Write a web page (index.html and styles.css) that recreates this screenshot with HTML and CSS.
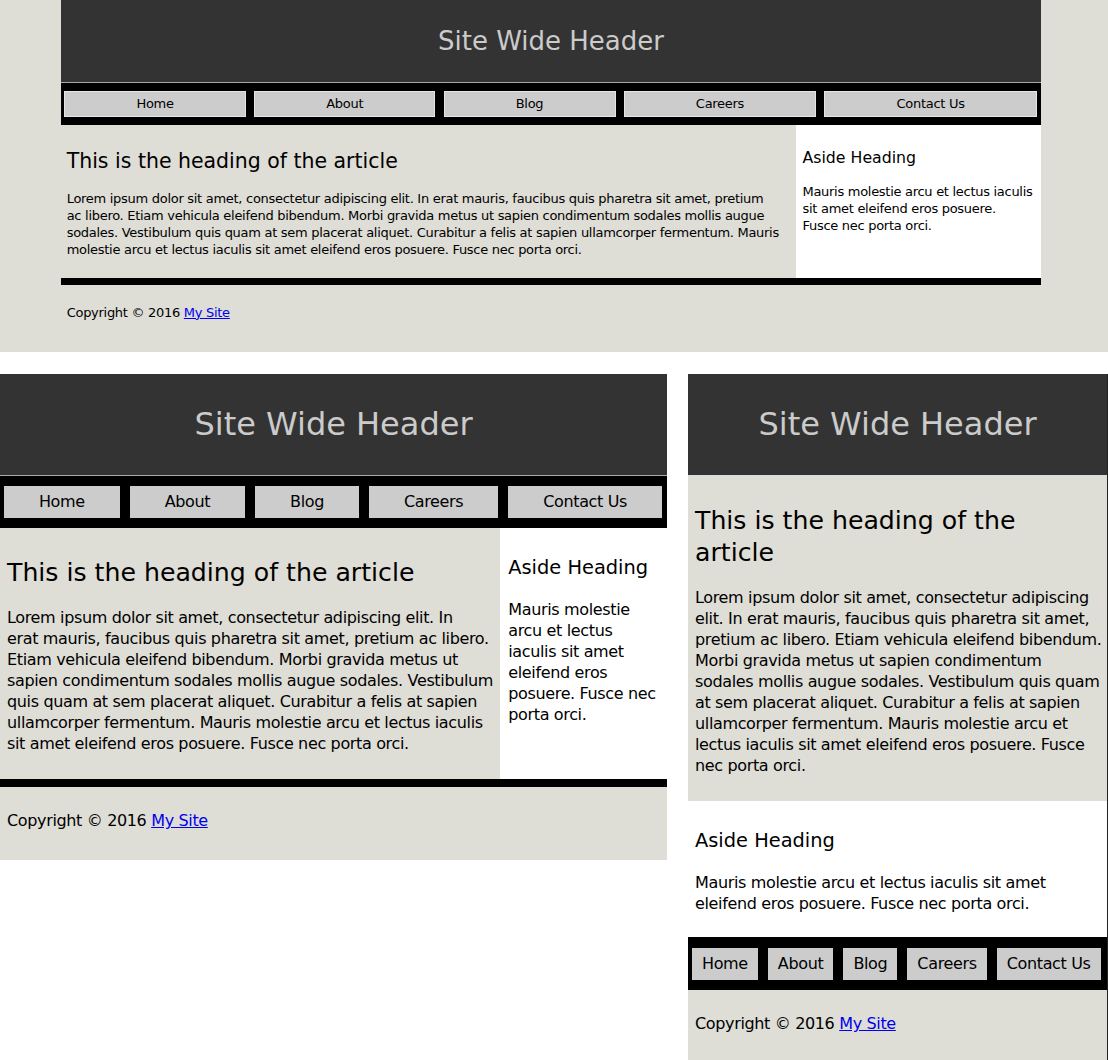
FILE: index.html
```html
<!DOCTYPE html>
<html lang="en">
<head>
<meta charset="utf-8">
<title>Responsive layout</title>
<link rel="stylesheet" href="styles.css">
</head>
<body>
<div class="shot shot--wide">
  <div class="site">
    <header class="site-header"><h1>Site Wide Header</h1></header>
    <nav class="site-nav">
      <a class="nav-link" href="#">Home</a>
      <a class="nav-link" href="#">About</a>
      <a class="nav-link" href="#">Blog</a>
      <a class="nav-link" href="#">Careers</a>
      <a class="nav-link" href="#">Contact Us</a>
    </nav>
    <div class="site-main">
      <article class="article">
        <h2>This is the heading of the article</h2>
        <p>Lorem ipsum dolor sit amet, consectetur adipiscing elit. In erat mauris, faucibus quis pharetra sit amet, pretium<br>ac libero. Etiam vehicula eleifend bibendum. Morbi gravida metus ut sapien condimentum sodales mollis augue<br>sodales. Vestibulum quis quam at sem placerat aliquet. Curabitur a felis at sapien ullamcorper fermentum. Mauris<br>molestie arcu et lectus iaculis sit amet eleifend eros posuere. Fusce nec porta orci.</p>
      </article>
      <aside class="aside">
        <h3>Aside Heading</h3>
        <p>Mauris molestie arcu et lectus iaculis<br>sit amet eleifend eros posuere.<br>Fusce nec porta orci.</p>
      </aside>
    </div>
    <div class="divider"></div>
    <footer class="site-footer"><p>Copyright © 2016 <a href="#">My Site</a></p></footer>
  </div>
</div>

<div class="row">
  <div class="shot shot--mid">
    <div class="site">
      <header class="site-header"><h1>Site Wide Header</h1></header>
      <nav class="site-nav">
        <a class="nav-link" href="#">Home</a>
        <a class="nav-link" href="#">About</a>
        <a class="nav-link" href="#">Blog</a>
        <a class="nav-link" href="#">Careers</a>
        <a class="nav-link" href="#">Contact Us</a>
      </nav>
      <div class="site-main">
        <article class="article">
          <h2>This is the heading of the article</h2>
          <p>Lorem ipsum dolor sit amet, consectetur adipiscing elit. In<br>erat mauris, faucibus quis pharetra sit amet, pretium ac libero.<br>Etiam vehicula eleifend bibendum. Morbi gravida metus ut<br>sapien condimentum sodales mollis augue sodales. Vestibulum<br>quis quam at sem placerat aliquet. Curabitur a felis at sapien<br>ullamcorper fermentum. Mauris molestie arcu et lectus iaculis<br>sit amet eleifend eros posuere. Fusce nec porta orci.</p>
        </article>
        <aside class="aside">
          <h3>Aside Heading</h3>
          <p>Mauris molestie<br>arcu et lectus<br>iaculis sit amet<br>eleifend eros<br>posuere. Fusce nec<br>porta orci.</p>
        </aside>
      </div>
      <div class="divider"></div>
      <footer class="site-footer"><p>Copyright © 2016 <a href="#">My Site</a></p></footer>
    </div>
  </div>

  <div class="shot shot--narrow">
    <div class="site">
      <header class="site-header"><h1>Site Wide Header</h1></header>
      <div class="site-main">
        <article class="article">
          <h2>This is the heading of the<br>article</h2>
          <p>Lorem ipsum dolor sit amet, consectetur adipiscing<br>elit. In erat mauris, faucibus quis pharetra sit amet,<br>pretium ac libero. Etiam vehicula eleifend bibendum.<br>Morbi gravida metus ut sapien condimentum<br>sodales mollis augue sodales. Vestibulum quis quam<br>at sem placerat aliquet. Curabitur a felis at sapien<br>ullamcorper fermentum. Mauris molestie arcu et<br>lectus iaculis sit amet eleifend eros posuere. Fusce<br>nec porta orci.</p>
        </article>
        <aside class="aside">
          <h3>Aside Heading</h3>
          <p>Mauris molestie arcu et lectus iaculis sit amet<br>eleifend eros posuere. Fusce nec porta orci.</p>
        </aside>
      </div>
      <nav class="site-nav">
        <a class="nav-link" href="#">Home</a>
        <a class="nav-link" href="#">About</a>
        <a class="nav-link" href="#">Blog</a>
        <a class="nav-link" href="#">Careers</a>
        <a class="nav-link" href="#">Contact Us</a>
      </nav>
      <footer class="site-footer"><p>Copyright © 2016 <a href="#">My Site</a></p></footer>
    </div>
  </div>
</div>
</body>
</html>
```

FILE: styles.css
```css
html, body {
  margin: 0;
  padding: 0;
  background: #ffffff;
}

body {
  font-family: "DejaVu Sans", "Noto Sans", sans-serif;
  color: #000000;
  overflow: hidden;
}

.shot {
  box-sizing: border-box;
  overflow: hidden;
}

.shot--wide {
  height: 352px;
  background: #deddd6;
  padding-left: 61px;
}

.shot--wide .site {
  width: 980px;
  font-size: 13px;
}

.row {
  display: flex;
  align-items: flex-start;
  gap: 21px;
  margin-top: 22px;
}

.shot--mid {
  width: 667px;
  flex: 0 0 667px;
}

.shot--narrow {
  width: 420px;
  flex: 0 0 420px;
  height: 686px;
  border-right: 1px solid #222222;
}

.site {
  font-size: 16px;
}

/* header */
.site-header {
  background: #333333;
  height: 6.3125em;
  border-bottom: 1px solid #a9a9a9;
}

.site-header h1 {
  margin: 0;
  font-size: 2em;
  font-weight: normal;
  line-height: 3.125;
  text-align: center;
  color: #cbcbcb;
}

.shot--wide .site-header h1 {
  line-height: 3.18;
}

.shot--narrow .site-header {
  border-bottom: 0;
}

/* nav */
.site-nav {
  display: flex;
  background: #000000;
  padding: 0.625em 0.3125em 0.625em 0.25em;
  gap: 0.625em;
}

.nav-link {
  flex: 1 1 auto;
  background: #cccccc;
  color: #000000;
  text-decoration: none;
  text-align: center;
  padding: 0.3125em 0.625em;
  line-height: 1.375;
  letter-spacing: -0.022em;
  white-space: nowrap;
}

.shot--wide .nav-link {
  box-shadow: inset 0 0 0 1px #e4e4e4;
}

.shot--narrow .nav-link {
  flex: 0 0 auto;
}

.shot--narrow .site-nav {
  padding-top: 0.6875em;
}

/* main */
.site-main {
  display: flex;
}

.shot--narrow .site-main {
  flex-direction: column;
}

.article {
  flex: 0 0 75%;
  box-sizing: border-box;
  padding: 0 0.4375em;
  background: #deddd6;
}

.aside {
  flex: 0 0 25%;
  box-sizing: border-box;
  padding: 0 0.25em 0 0.5em;
  background: #ffffff;
}

.shot--narrow .article,
.shot--narrow .aside {
  flex: 0 0 auto;
  padding: 0 0.4375em;
}

.article h2 {
  font-size: 1.575em;
  font-weight: normal;
  line-height: 1.27;
  margin: 1.151em 0 0.734em;
  white-space: nowrap;
}

.shot--narrow .article h2 {
  margin-top: 1.19em;
}

.aside h3 {
  font-size: 1.2125em;
  font-weight: normal;
  line-height: 1.237;
  margin: 1.443em 0 0.979em;
}

.article p,
.aside p {
  margin: 0 0 1.5625em;
  line-height: 1.3125;
  letter-spacing: -0.022em;
  white-space: nowrap;
}

.shot--narrow .aside p {
  margin-bottom: 1.4375em;
}

.divider {
  height: 0.5em;
  background: #000000;
}

/* footer */
.site-footer {
  padding: 1.4375em 0.4375em 1.8125em;
  background: #deddd6;
}

.site-footer p {
  margin: 0;
  line-height: 1.3125;
  letter-spacing: -0.022em;
}

.site-footer a {
  color: #0000ee;
}

.shot--narrow .site-footer {
  padding-bottom: 4em;
}
```
